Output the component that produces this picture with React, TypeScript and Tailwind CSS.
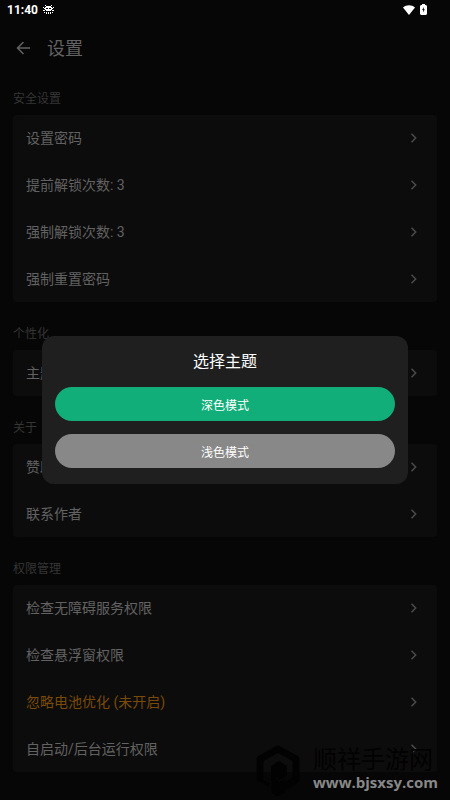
import { useState } from 'react';

interface SettingItem {
  label: string;
  warning?: boolean;
}

interface SettingSection {
  title: string;
  items: SettingItem[];
}

const sections: SettingSection[] = [
  {
    title: '安全设置',
    items: [
      { label: '设置密码' },
      { label: '提前解锁次数: 3' },
      { label: '强制解锁次数: 3' },
      { label: '强制重置密码' },
    ],
  },
  { title: '个性化', items: [{ label: '主题' }] },
  { title: '关于', items: [{ label: '赞助' }, { label: '联系作者' }] },
  {
    title: '权限管理',
    items: [
      { label: '检查无障碍服务权限' },
      { label: '检查悬浮窗权限' },
      { label: '忽略电池优化 (未开启)', warning: true },
      { label: '自启动/后台运行权限' },
    ],
  },
];

function StatusBar() {
  return (
    <div className="flex h-5 items-center justify-between pl-[7px] pr-[23px] text-white">
      <div className="flex items-center gap-[5px]">
        <span className="text-xs font-bold leading-5">11:40</span>
        <svg width="11" height="10" viewBox="0 0 11 10" fill="currentColor" aria-hidden="true">
          <path d="M2 0h1v1H2zM8 0h1v1H8zM3 1h5v1h1v3H8v1H3V5H2V2h1z" />
          <path d="M0 2h1v1H0zM10 2h1v1h-1zM1 3h1v1H1zM9 3h1v1H9zM0 5h2v1H0zM9 5h2v1H9z" />
          <path d="M1 7h1v1H1zM3 7h1v2H3zM5 7h1v2H5zM7 7h1v2H7zM9 7h1v1H9z" />
          <path d="M3 3h2v1H3zM6 3h2v1H6z" fill="#060606" />
        </svg>
      </div>
      <div className="flex items-center gap-[5px]">
        <svg width="12" height="10" viewBox="0 0 12 10" fill="currentColor" aria-hidden="true">
          <path d="M0 2.600C3.500-.5 8.500-.5 12 2.600L6 10z" />
        </svg>
        <svg width="7" height="11" viewBox="0 0 7 11" fill="currentColor" className="mb-[2px]" aria-hidden="true">
          <path d="M2 0h3v1h1l1 1v8l-1 1H1l-1-1V2l1-1h1z" />
          <path d="M3.800 3 2.200 6h1v2.500L4.800 5.300H3.800z" fill="#060606" />
        </svg>
      </div>
    </div>
  );
}

function ChevronRight() {
  return (
    <svg width="7" height="10" viewBox="0 0 7 10" fill="none" stroke="#4b4b4b" strokeWidth="1.500" aria-hidden="true">
      <path d="M1.500 .8 5.700 5 1.500 9.200" />
    </svg>
  );
}

function Watermark() {
  return (
    <div className="pointer-events-none absolute bottom-1 right-3 flex items-center gap-3">
      <svg width="46" height="52" viewBox="0 0 46 52" fill="none" aria-hidden="true">
        <path d="M5 37V15L23 5l18 10v21L28 43" stroke="#020202" strokeWidth="7" strokeLinejoin="round" />
        <path d="M16 22 24 17l8 5v9l-8 5-3-3-5 3z" fill="#020202" />
        <path d="M5 36 14 41M18 34v14l5 3 6-4v-9l-6 2z" stroke="#020202" strokeWidth="3" fill="#020202" />
      </svg>
      <div className="flex flex-col">
        <span className="text-2xl leading-6 text-[#020202]">顺祥手游网</span>
        <span className="font-['Open_Sans','Noto_Sans',sans-serif] text-[15px] font-bold leading-5 text-[#888888]">
          www.bjsxsy.com
        </span>
      </div>
    </div>
  );
}

export default function App() {
  const [open, setOpen] = useState<boolean>(true);

  const closeDialog = () => {
    setOpen(false);
  };

  return (
    <div className="relative min-h-screen bg-[#060606] pb-7 font-[Roboto,'Noto_Sans_CJK_SC',sans-serif]">
      <StatusBar />

      <header className="flex h-[58px] items-center gap-4 px-4">
        <button type="button" aria-label="返回" className="text-[#626262]">
          <svg width="15" height="14" viewBox="0 0 15 14" fill="none" stroke="currentColor" strokeWidth="1.500" aria-hidden="true">
            <path d="M14 6H1.500M7.500 0l-6 6 6 6" />
          </svg>
        </button>
        <h1 className="text-lg leading-7 text-[#626262]">设置</h1>
      </header>

      <main className="flex flex-col gap-[22px] px-[13px] pt-[11px]">
        {sections.map((section) => (
          <section key={section.title}>
            <h2 className="mb-[6px] text-xs leading-5 text-[#353535]">{section.title}</h2>
            <ul className="flex flex-col gap-px rounded bg-[#0c0c0c]">
              {section.items.map((item) => (
                <li key={item.label}>
                  <button
                    type="button"
                    onClick={() => item.label === '主题' && setOpen(true)}
                    className={`flex h-[46px] w-full items-center justify-between pl-[13px] pr-5 text-sm ${
                      item.warning ? 'text-[#7a4a06]' : 'text-[#626262]'
                    }`}
                  >
                    <span>{item.label}</span>
                    <ChevronRight />
                  </button>
                </li>
              ))}
            </ul>
          </section>
        ))}
      </main>

      {open && (
        <div className="absolute inset-0 flex items-center justify-center px-[42px] pt-5">
          <div
            role="dialog"
            aria-labelledby="theme-title"
            className="flex w-full flex-col gap-[13px] rounded-xl bg-[#1f1f1f] px-[13px] pb-4 pt-[14px]"
          >
            <h2 id="theme-title" className="text-center text-base leading-6 text-white">
              选择主题
            </h2>
            <button type="button" onClick={closeDialog} className="h-[34px] rounded-full bg-[#12ae79] pt-1 text-xs text-white">
              深色模式
            </button>
            <button type="button" onClick={closeDialog} className="h-[34px] rounded-full bg-[#888888] pt-1 text-xs text-white">
              浅色模式
            </button>
          </div>
        </div>
      )}

      <Watermark />
    </div>
  );
}
